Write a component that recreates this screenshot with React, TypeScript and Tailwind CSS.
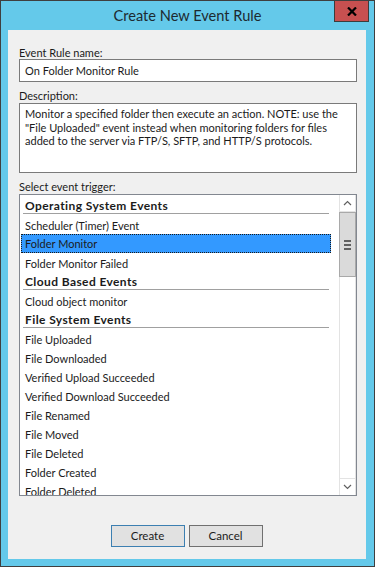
import { useState } from 'react';

type Row = { label: string; header?: boolean };

const rows: Row[] = [
    { label: 'Operating System Events', header: true },
    { label: 'Scheduler (Timer) Event' },
    { label: 'Folder Monitor' },
    { label: 'Folder Monitor Failed' },
    { label: 'Cloud Based Events', header: true },
    { label: 'Cloud object monitor' },
    { label: 'File System Events', header: true },
    { label: 'File Uploaded' },
    { label: 'File Downloaded' },
    { label: 'Verified Upload Succeeded' },
    { label: 'Verified Download Succeeded' },
    { label: 'File Renamed' },
    { label: 'File Moved' },
    { label: 'File Deleted' },
    { label: 'Folder Created' },
    { label: 'Folder Deleted' },
];

const ScrollBar = () => (
    <div className="w-[17px] flex flex-col bg-white border-x border-[#e3e3e3]">
        <div className="h-[17px] flex items-center justify-center border-b border-[#e3e3e3]">
            <svg width="9" height="6" viewBox="0 0 9 6">
                <polyline points="1,5 4.5,1.5 8,5" fill="none" stroke="#606060" strokeWidth="1.2" />
            </svg>
        </div>
        <div className="h-[65px] bg-[#dadada] border border-[#a9a9a9] -mx-px flex flex-col items-center justify-center gap-[2px]">
            <div className="w-[7px] h-[2px] bg-[#606060]" />
            <div className="w-[7px] h-[2px] bg-[#606060]" />
            <div className="w-[7px] h-[2px] bg-[#606060]" />
        </div>
        <div className="flex-1" />
        <div className="h-[17px] flex items-center justify-center border-t border-[#e3e3e3]">
            <svg width="9" height="6" viewBox="0 0 9 6">
                <polyline points="1,1 4.5,4.5 8,1" fill="none" stroke="#606060" strokeWidth="1.2" />
            </svg>
        </div>
    </div>
);

const App = () => {
    const [selected, setSelected] = useState('Folder Monitor');

    return (
        <div className="w-[375px] h-[567px] bg-[#64c9ea] border border-[#3f3f3f] flex flex-col font-[Lato,'Noto_Sans',sans-serif] text-[#1b1b1b] overflow-hidden">
            {/* title bar */}
            <div className="relative h-[29px] flex items-center justify-center">
                <span className="text-[14.6px] text-[#1d2a30] pt-[1px]">Create New Event Rule</span>
                <div className="absolute top-[-1px] right-[5px] w-[35px] h-[22px] bg-[#c75050] border border-[#3c3c3c] flex items-center justify-center">
                    <svg width="10" height="9" viewBox="0 0 10 9">
                        <path d="M1 0.5 L9 8.5 M9 0.5 L1 8.5" stroke="#000" strokeWidth="2.2" />
                    </svg>
                </div>
            </div>

            {/* client area */}
            <div className="mx-[7px] w-[358px] h-[529px] bg-[#f0f0f0] flex flex-col px-[11px] pt-[14px] text-[11px]">
                <div className="h-[15px] leading-[15px] pt-[1px]">Event Rule name:</div>
                <div className="w-[338px] h-[23px] bg-white border border-[#7a7a7a] flex items-center pl-[5px] pt-[1px]">
                    On Folder Monitor Rule
                </div>

                <div className="h-[15px] leading-[15px] mt-[6px]">Description:</div>
                <div className="w-[338px] h-[70px] bg-white border border-[#7a7a7a] pl-[5px] pt-[3px] leading-[13.5px] whitespace-nowrap">
                    Monitor a specified folder then execute an action. NOTE: use the
                    <br />
                    "File Uploaded" event instead when monitoring folders for files
                    <br />
                    added to the server via FTP/S, SFTP, and HTTP/S protocols.
                </div>

                <div className="h-[15px] leading-[15px] mt-[6px]">Select event trigger:</div>
                <div className="w-[338px] h-[302px] bg-white border border-[#828790] flex">
                    <div className="flex-1 pt-[1px] overflow-hidden">
                        {rows.map((r) =>
                            r.header ? (
                                <div
                                    key={r.label}
                                    className="h-[18px] mb-[1px] ml-[3px] w-[306px] border-b border-[#a0a0a0] flex items-center pl-[2px] pt-[3px] font-bold text-[12px] tracking-[0.4px]"
                                >
                                    {r.label}
                                </div>
                            ) : (
                                <div
                                    key={r.label}
                                    onClick={() => setSelected(r.label)}
                                    className={
                                        selected === r.label
                                            ? 'h-[19px] ml-[1px] w-[310px] flex items-center pl-[3px] pt-[2px] bg-[#3399ff] border border-dotted border-[#1a1a1a]'
                                            : 'h-[19px] ml-[1px] w-[310px] flex items-center pl-[4px] pt-[3px]'
                                    }
                                >
                                    {r.label}
                                </div>
                            ),
                        )}
                    </div>
                    <ScrollBar />
                </div>

                <div className="mt-[29px] flex justify-center gap-[4px] pr-[1px]">
                    <button className="w-[74px] h-[22px] bg-[#e1e1e1] border border-[#3c7fb1] text-[11.5px]">
                        Create
                    </button>
                    <button className="w-[74px] h-[22px] bg-[#e1e1e1] border border-[#707070] text-[11.5px]">
                        Cancel
                    </button>
                </div>
            </div>
        </div>
    );
};

export default App;
